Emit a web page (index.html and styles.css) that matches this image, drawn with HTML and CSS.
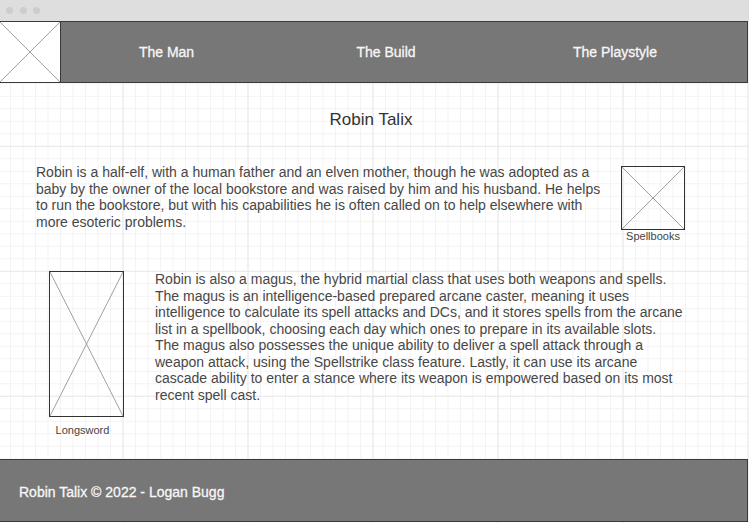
FILE: index.html
```html
<!DOCTYPE html>
<html lang="en">
<head>
<meta charset="utf-8">
<title>Robin Talix</title>
<link rel="stylesheet" href="styles.css">
</head>
<body>
<div class="titlebar">
  <span class="dot"></span><span class="dot"></span><span class="dot"></span>
</div>
<header class="nav">
  <div class="logo">
    <svg class="xbox" viewBox="0 0 100 100" preserveAspectRatio="none"><line x1="0" y1="0" x2="100" y2="100"/><line x1="100" y1="0" x2="0" y2="100"/></svg>
  </div>
  <nav class="links">
    <a class="link">The Man</a>
    <a class="link">The Build</a>
    <a class="link">The Playstyle</a>
  </nav>
</header>
<main class="main">
  <h1 class="title">Robin Talix</h1>
  <section class="row row-one">
    <p class="text text-one">Robin is a half-elf, with a human father and an elven mother, though he was adopted as a baby by the owner of the local bookstore and was raised by him and his husband. He helps to run the bookstore, but with his capabilities he is often called on to help elsewhere with more esoteric problems.</p>
    <figure class="fig fig-books">
      <div class="pic pic-books">
        <svg class="xbox" viewBox="0 0 100 100" preserveAspectRatio="none"><line x1="0" y1="0" x2="100" y2="100"/><line x1="100" y1="0" x2="0" y2="100"/></svg>
      </div>
      <figcaption class="cap">Spellbooks</figcaption>
    </figure>
  </section>
  <section class="row row-two">
    <figure class="fig fig-sword">
      <div class="pic pic-sword">
        <svg class="xbox" viewBox="0 0 100 100" preserveAspectRatio="none"><line x1="0" y1="0" x2="100" y2="100"/><line x1="100" y1="0" x2="0" y2="100"/></svg>
      </div>
      <figcaption class="cap cap-sword">Longsword</figcaption>
    </figure>
    <p class="text text-two">Robin is also a magus, the hybrid martial class that uses both weapons and spells. The magus is an intelligence-based prepared arcane caster, meaning it uses intelligence to calculate its spell attacks and DCs, and it stores spells from the arcane list in a spellbook, choosing each day which ones to prepare in its available slots. <span class="keep">The magus</span> also possesses the unique ability to deliver a spell attack through a weapon attack, using the Spellstrike class feature. Lastly, it can use its arcane cascade ability to enter a stance where its weapon is empowered based on its most recent spell cast.</p>
  </section>
</main>
<footer class="footer">
  <span class="foot-text">Robin Talix © 2022 - Logan Bugg</span>
</footer>
</body>
</html>
```

FILE: styles.css
```css
html, body {
  margin: 0;
  padding: 0;
}
body {
  width: 749px;
  height: 523px;
  overflow: hidden;
  font-family: "Liberation Sans", Arial, sans-serif;
  background-color: #ffffff;
  background-image:
    linear-gradient(to right, #e9e9e9 1px, transparent 1px),
    linear-gradient(to bottom, #e9e9e9 1px, transparent 1px),
    linear-gradient(to right, #f3f3f3 1px, transparent 1px),
    linear-gradient(to bottom, #f3f3f3 1px, transparent 1px);
  background-size: 125px 125px, 125px 125px, 12.5px 12.5px, 12.5px 12.5px;
  background-position: 122.5px 0, 0 20.8px, 10px 0, 0 8.3px;
}
.titlebar {
  height: 21px;
  background: #dedede;
  display: flex;
  align-items: center;
  gap: 6.5px;
  padding-left: 6px;
  box-sizing: border-box;
}
.dot {
  width: 7px;
  height: 7px;
  border-radius: 50%;
  background: #cdcdcd;
}
.nav {
  width: 748px;
  height: 62px;
  box-sizing: border-box;
  border: 1px solid #3a3a3a;
  border-left: none;
  display: flex;
  background: #777777;
}
.logo {
  width: 60px;
  flex: none;
  background: #ffffff;
  border-right: 1px solid #3a3a3a;
}
.xbox {
  display: block;
  width: 100%;
  height: 100%;
}
.xbox line {
  stroke: #a0a0a0;
  stroke-width: 1;
  vector-effect: non-scaling-stroke;
}
.links {
  flex: 1;
  display: grid;
  grid-template-columns: 211px 228px 230px 1fr;
  align-items: center;
}
.link {
  text-align: center;
  color: #f6f6f6;
  font-size: 14px;
  -webkit-text-stroke: 0.3px #f6f6f6;
}
.main {
  height: 376px;
  box-sizing: border-box;
  padding-top: 27px;
}
.title {
  margin: 0;
  font-size: 17px;
  line-height: 20px;
  font-weight: normal;
  color: #333333;
  text-align: center;
  padding-right: 7px;
}
.row {
  display: flex;
  align-items: flex-start;
}
.row-one {
  margin-top: 34px;
  padding-left: 36px;
  gap: 13px;
}
.row-two {
  margin-top: 28px;
  padding-left: 49px;
  gap: 31px;
}
.text {
  margin: 0;
  font-size: 14px;
  line-height: 16.5px;
  color: #474747;
}
.text-one {
  width: 572px;
}
.text-two {
  width: 530px;
}
.keep {
  white-space: nowrap;
}
.fig {
  margin: 0;
  display: flex;
  flex-direction: column;
  align-items: center;
}
.fig-books {
  margin-top: 2px;
}
.pic {
  box-sizing: border-box;
  border: 1px solid #333333;
}
.pic-books {
  width: 64px;
  height: 64px;
}
.pic-sword {
  width: 75px;
  height: 146px;
}
.cap {
  font-size: 11px;
  line-height: 13px;
  color: #444444;
  white-space: nowrap;
}
.cap-sword {
  margin-top: 7px;
  margin-right: 8px;
}
.footer {
  width: 748px;
  height: 63px;
  box-sizing: border-box;
  border: 1px solid #3a3a3a;
  border-left: none;
  background: #777777;
  display: flex;
  align-items: center;
  padding-left: 19px;
  padding-top: 2px;
}
.foot-text {
  color: #f6f6f6;
  font-size: 14px;
  -webkit-text-stroke: 0.3px #f6f6f6;
}
```
